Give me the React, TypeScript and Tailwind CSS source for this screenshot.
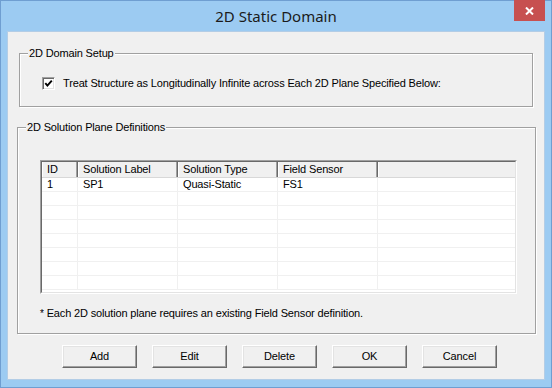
import React from 'react';

const dlgFont = { fontFamily: '"Liberation Sans", Arial, sans-serif' };

const columns = [
  { key: 'id', label: 'ID', w: 'w-[36px]' },
  { key: 'label', label: 'Solution Label', w: 'w-[100px]' },
  { key: 'type', label: 'Solution Type', w: 'w-[100px]' },
  { key: 'sensor', label: 'Field Sensor', w: 'w-[100px]' },
];

const rows = [{ id: '1', label: 'SP1', type: 'Quasi-Static', sensor: 'FS1' }];

function GroupBox({ label, className, children }: { label: string; className: string; children?: React.ReactNode }) {
  return (
    <div className={`relative border border-[#a0a0a0] shadow-[1px_1px_0_#ffffff,inset_1px_1px_0_#ffffff] ${className}`}>
      <span className="absolute -top-[7px] left-[8px] bg-[#f0f0f0] px-[1px] text-[11px] leading-[13px] text-black">{label}</span>
      {children}
    </div>
  );
}

function Button({ children }: { children: React.ReactNode }) {
  return (
    <button className="w-[75px] h-[23px] bg-[#f0f0f0] border border-t-white border-l-white border-b-[#696969] border-r-[#696969] shadow-[inset_-1px_-1px_0_#a0a0a0,inset_1px_1px_0_#e3e3e3] text-[11px] leading-[13px] text-black flex items-center justify-center">
      {children}
    </button>
  );
}

export default function App() {
  const emptyRows = 8 - rows.length;

  return (
    <div className="w-[552px] h-[388px] bg-[#9ccbf2] border border-[#6f9ed1] flex flex-col tracking-[-0.15px]" style={dlgFont}>
      {/* Title bar */}
      <div className="relative h-[30px] flex items-center justify-center">
        <span className="text-[15px] text-[#1b1b1b] tracking-normal" style={{ fontFamily: '"Noto Sans", "Open Sans", sans-serif' }}>
          2D Static Domain
        </span>
        <div className="absolute right-[6px] -top-[1px] w-[31px] h-[21px] bg-[#c75050] flex items-center justify-center">
          <svg width="9" height="8" viewBox="0 0 9 8">
            <path d="M1 0.5 L8 7.5 M8 0.5 L1 7.5" stroke="#ffffff" strokeWidth="2" />
          </svg>
        </div>
      </div>

      {/* Client area */}
      <div className="mx-[6px] h-[349px] bg-[#f0f0f0] border border-[#b3cde6] flex flex-col">
        <GroupBox label="2D Domain Setup" className="mt-[21px] ml-[11px] w-[514px] h-[54px]">
          <div className="flex items-center pt-[23px] pl-[22px] gap-[8px]">
            <div className="w-[13px] h-[13px] bg-white border border-t-[#a0a0a0] border-l-[#a0a0a0] border-b-white border-r-white shadow-[inset_1px_1px_0_#696969,inset_-1px_-1px_0_#e3e3e3] flex items-center justify-center">
              <svg width="9" height="9" viewBox="0 0 9 9">
                <polyline points="1.3,4.2 3.4,6.6 7.8,1.6" fill="none" stroke="#000000" strokeWidth="1.9" />
              </svg>
            </div>
            <span className="text-[11px] leading-[13px] text-black">
              Treat Structure as Longitudinally Infinite across Each 2D Plane Specified Below:
            </span>
          </div>
        </GroupBox>

        <GroupBox label="2D Solution Plane Definitions" className="mt-[20px] ml-[9px] w-[519px] h-[207px]">
          <div className="pt-[32px] pl-[22px]">
            {/* List view */}
            <div className="w-[477px] h-[134px] border border-t-[#a0a0a0] border-l-[#a0a0a0] border-b-white border-r-white">
              <div className="w-full h-full border border-t-[#696969] border-l-[#696969] border-b-[#e3e3e3] border-r-[#e3e3e3] bg-white flex flex-col overflow-hidden">
                <div className="flex h-[16px] bg-[#f0f0f0] border-b border-[#d8d8d8] shrink-0">
                  {columns.map((c) => (
                    <div
                      key={c.key}
                      className={`${c.w} shrink-0 border-l border-white border-r border-r-[#696969] shadow-[inset_-1px_0_0_#a0a0a0] pl-[4px] text-[11px] leading-[15px] text-black`}
                    >
                      {c.label}
                    </div>
                  ))}
                  <div className="flex-1 border-l border-white" />
                </div>
                {rows.map((r) => (
                  <div key={r.id} className="flex h-[14px] border-b border-[#f0f0f0] shrink-0 text-[11px] leading-[13px] text-black">
                    <div className="w-[36px] shrink-0 border-r border-[#f0f0f0] pl-[5px]">{r.id}</div>
                    <div className="w-[100px] shrink-0 border-r border-[#f0f0f0] pl-[5px]">{r.label}</div>
                    <div className="w-[100px] shrink-0 border-r border-[#f0f0f0] pl-[5px]">{r.type}</div>
                    <div className="w-[100px] shrink-0 border-r border-[#f0f0f0] pl-[5px]">{r.sensor}</div>
                    <div className="flex-1" />
                  </div>
                ))}
                {Array.from({ length: emptyRows }).map((_, i) => (
                  <div key={i} className="flex h-[14px] border-b border-[#f0f0f0] shrink-0">
                    <div className="w-[36px] shrink-0 border-r border-[#f0f0f0]" />
                    <div className="w-[100px] shrink-0 border-r border-[#f0f0f0]" />
                    <div className="w-[100px] shrink-0 border-r border-[#f0f0f0]" />
                    <div className="w-[100px] shrink-0 border-r border-[#f0f0f0]" />
                    <div className="flex-1" />
                  </div>
                ))}
              </div>
            </div>
            <p className="mt-[13px] text-[11px] leading-[13px] text-black">
              <span className="text-[10px] align-top">*</span> Each 2D solution plane requires an existing Field Sensor definition.
            </p>
          </div>
        </GroupBox>

        <div className="mt-[11px] ml-[54px] flex gap-[15px]">
          <Button>Add</Button>
          <Button>Edit</Button>
          <Button>Delete</Button>
          <Button>OK</Button>
          <Button>Cancel</Button>
        </div>
      </div>
    </div>
  );
}
